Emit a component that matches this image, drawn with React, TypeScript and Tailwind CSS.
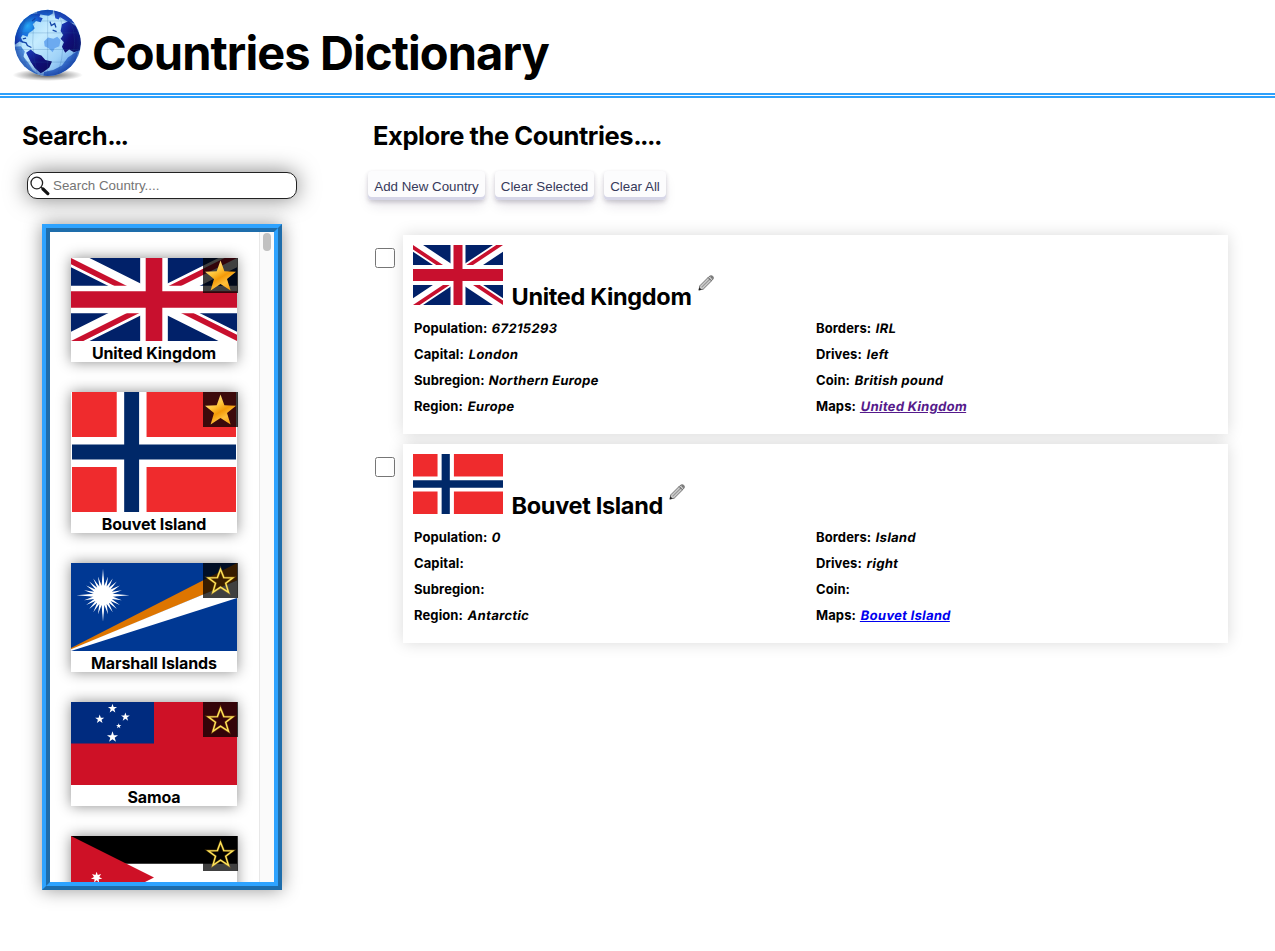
import { useId } from "react";
import type { ReactNode } from "react";

function starPoints(cx: number, cy: number, outer: number, inner: number, n: number) {
  const pts: string[] = [];
  for (let i = 0; i < n * 2; i++) {
    const r = i % 2 === 0 ? outer : inner;
    const a = -Math.PI / 2 + (i * Math.PI) / n;
    pts.push((cx + r * Math.cos(a)).toFixed(2) + "," + (cy + r * Math.sin(a)).toFixed(2));
  }
  return pts.join(" ");
}

function UnitedKingdomFlag({ className }: { className: string }) {
  const id = useId();
  return (
    <svg viewBox="0 0 60 30" preserveAspectRatio="none" className={className}>
      <clipPath id={id}>
        <path d="M30,15h30v15zv15h-30zh-30v-15zv-15h30z" />
      </clipPath>
      <path d="M0,0v30h60v-30z" fill="#012169" />
      <path d="M0,0L60,30M60,0L0,30" stroke="#fff" strokeWidth="6" />
      <path d="M0,0L60,30M60,0L0,30" clipPath={`url(#${id})`} stroke="#c8102e" strokeWidth="4" />
      <path d="M30,0v30M0,15h60" stroke="#fff" strokeWidth="10" />
      <path d="M30,0v30M0,15h60" stroke="#c8102e" strokeWidth="6" />
    </svg>
  );
}

function BouvetFlag({ className }: { className: string }) {
  return (
    <svg viewBox="0 0 22 16" preserveAspectRatio="none" className={className}>
      <path d="M0,0h22v16h-22z" fill="#ef2b2d" />
      <path d="M8,0v16M0,8h22" stroke="#fff" strokeWidth="4" />
      <path d="M8,0v16M0,8h22" stroke="#002868" strokeWidth="2" />
    </svg>
  );
}

function MarshallFlag({ className }: { className: string }) {
  return (
    <svg viewBox="0 0 166 88" preserveAspectRatio="none" className={className}>
      <path d="M0,0h166v88h-166z" fill="#003893" />
      <path d="M0,85L166,0V17.5L0,87z" fill="#dd7500" />
      <path d="M0,86.3L166,17.5V35L0,88z" fill="#fff" />
      <polygon points={starPoints(32, 32.3, 19.5, 9.5, 24)} fill="#fff" />
      <polygon points={starPoints(32, 32.3, 26.5, 2.8, 4)} fill="#fff" />
    </svg>
  );
}

function SamoaFlag({ className }: { className: string }) {
  return (
    <svg viewBox="0 0 166 83" preserveAspectRatio="none" className={className}>
      <path d="M0,0h166v83h-166z" fill="#ce1126" />
      <path d="M0,0h83v41.5h-83z" fill="#002b7f" />
      <polygon points={starPoints(41.5, 6.5, 4.8, 1.9, 5)} fill="#fff" />
      <polygon points={starPoints(28.7, 17.2, 4.8, 1.9, 5)} fill="#fff" />
      <polygon points={starPoints(54.4, 15, 4.6, 1.8, 5)} fill="#fff" />
      <polygon points={starPoints(47.7, 24, 2.8, 1.1, 5)} fill="#fff" />
      <polygon points={starPoints(41.5, 35, 5.8, 2.3, 5)} fill="#fff" />
    </svg>
  );
}

function JordanFlag({ className }: { className: string }) {
  return (
    <svg viewBox="0 0 166 83" preserveAspectRatio="none" className={className}>
      <path d="M0,0h166v83h-166z" fill="#fff" />
      <path d="M0,0h166v27.7h-166z" fill="#000" />
      <path d="M0,55.3h166v27.7h-166z" fill="#007a3d" />
      <path d="M0,0L83,41.5L0,83z" fill="#ce1126" />
      <polygon points={starPoints(25.6, 41.5, 5.8, 2.7, 7)} fill="#fff" />
    </svg>
  );
}

function Globe() {
  return (
    <svg viewBox="36 20 216 226" className="ml-[12px] mt-[7px] h-[75px] w-[72px] shrink-0">
      <defs>
        <radialGradient id="ocean" cx="0.45" cy="0.4" r="0.7">
          <stop offset="0" stopColor="#27a8f4" />
          <stop offset="0.5" stopColor="#1668dc" />
          <stop offset="1" stopColor="#1a2fa8" />
        </radialGradient>
        <linearGradient id="land" x1="0" y1="0" x2="1" y2="1">
          <stop offset="0" stopColor="#7cc8f6" />
          <stop offset="0.4" stopColor="#c6ecff" />
          <stop offset="0.65" stopColor="#9fd2f8" />
          <stop offset="1" stopColor="#2c6fd0" />
        </linearGradient>
        <linearGradient id="deep" x1="0" y1="0" x2="1" y2="1">
          <stop offset="0" stopColor="#1b3fc0" />
          <stop offset="0.5" stopColor="#100f78" />
          <stop offset="1" stopColor="#0c0a58" />
        </linearGradient>
        <radialGradient id="rim" cx="0.5" cy="0.5" r="0.5">
          <stop offset="0.8" stopColor="#0a2c8e" stopOpacity="0" />
          <stop offset="1" stopColor="#0a2c8e" stopOpacity="0.5" />
        </radialGradient>
        <radialGradient id="ground">
          <stop offset="0" stopColor="#000" stopOpacity="0.7" />
          <stop offset="0.6" stopColor="#000" stopOpacity="0.25" />
          <stop offset="1" stopColor="#000" stopOpacity="0" />
        </radialGradient>
        <clipPath id="ball">
          <circle cx="143" cy="128" r="100" />
        </clipPath>
      </defs>
      <ellipse cx="143" cy="225" rx="106" ry="18" fill="url(#ground)" />
      <g clipPath="url(#ball)">
        <path d="M36 20h216v226H36z" fill="url(#land)" />
        <path d="M45 110L60 66L88 42L122 38L118 50L128 54L122 66L108 62L98 72L104 84L96 92L86 98L82 110L68 104L62 112L70 128L58 124L44 134z" fill="url(#ocean)" />
        <path d="M108 28L160 26L158 40L146 46L130 44L112 40z" fill="#1c62d0" />
        <path d="M162 30L206 40L232 70L206 66L190 56L180 50L176 58L166 54z" fill="#2350c8" />
        <path d="M186 72L206 62L228 78L246 120L240 150L222 156L208 148L196 158L186 140L192 126L182 116L190 104L182 92z" fill="url(#deep)" />
        <path d="M78 158L92 148L106 160L124 166L136 180L156 184L148 202L132 214L122 220L104 204L92 186z" fill="url(#deep)" />
        <path d="M132 124L144 112L160 116L172 110L182 120L178 138L164 144L158 156L146 144L134 138z" fill="#6caaf0" />
        <path d="M42 140L62 138L74 154L70 170L86 190L98 210L120 228L90 230L50 190z" fill="#2b70d2" opacity="0.75" />
        <path d="M236 150L226 184L202 212L166 228L130 230L132 216L160 210L186 196L204 172z" fill="#1b50bc" opacity="0.75" />
        <path d="M46 98H240M44 148H242M56 186H230M70 62H214M143 28V226M108 36Q86 126 112 224M178 36Q204 126 174 222M74 62Q48 126 78 196M212 62Q238 126 210 192" fill="none" stroke="#245f9b" strokeWidth="1.4" opacity="0.45" />
        <path d="M64 124L78 128L82 136L94 142M68 116L78 114M96 62L106 54M150 64L154 76L164 70L168 82M158 90L170 94" stroke="#1547a8" strokeWidth="4" fill="none" />
        <circle cx="143" cy="128" r="100" fill="url(#rim)" />
      </g>
    </svg>
  );
}

function GoldStar() {
  return (
    <svg viewBox="0 0 35 35" className="size-[35px]">
      <defs>
        <linearGradient id="gold" x1="0.2" y1="0" x2="0.8" y2="1">
          <stop offset="0" stopColor="#ffe9a8" />
          <stop offset="0.35" stopColor="#ffc53a" />
          <stop offset="0.55" stopColor="#f39a08" />
          <stop offset="0.75" stopColor="#ffc03c" />
          <stop offset="1" stopColor="#f79a05" />
        </linearGradient>
      </defs>
      <path d="M17.5 2.5L21.4 13.3L33 13.7L24 20.9L27.6 32.5L17.5 25.9L7.6 32.5L11 20.9L2 13.7L13.7 13.3z" fill="url(#gold)" />
    </svg>
  );
}

function OutlineStar() {
  return (
    <svg viewBox="0 0 35 35" className="size-[35px]">
      <path d="M17.5 6.2L20.8 14.6L29.8 14.8L22.7 20.3L25.5 29.4L17.5 24.2L9.9 29.4L12.5 20.3L5.2 14.8L14.4 14.6z" fill="none" stroke="#f0a818" strokeOpacity="0.3" strokeWidth="2.6" />
      <path d="M17.5 6.2L20.8 14.6L29.8 14.8L22.7 20.3L25.5 29.4L17.5 24.2L9.9 29.4L12.5 20.3L5.2 14.8L14.4 14.6z" fill="none" stroke="#ffe45a" strokeWidth="1.4" />
    </svg>
  );
}

function Pencil() {
  return (
    <svg viewBox="0 0 16 16" className="size-4">
      <path d="M1 15L1.8 10.8L11 1.6Q13 0 14.8 1.3Q16.2 3.2 14.4 5L5.2 14.2z" fill="#cdcdcd" stroke="#727272" strokeWidth="1" />
      <path d="M3.6 12.4L12 4" stroke="#9a9a9a" strokeWidth="1.2" />
      <path d="M10.2 2.6L13.4 5.8" stroke="#555" strokeWidth="1" />
      <path d="M0.5 15.5L1.4 12.4L3.6 14.6z" fill="#222" />
      <path d="M12 1.8Q13.4 0.6 14.6 1.5Q15.7 3 14.3 4.2z" fill="#777" />
    </svg>
  );
}

function Magnifier() {
  return (
    <svg viewBox="0 0 20 20" className="size-5 shrink-0">
      <circle cx="6.8" cy="7" r="5.8" fill="#fff" stroke="#222" strokeWidth="1.3" />
      <path d="M10.9 11.1L13 13" stroke="#222" strokeWidth="1.4" />
      <path d="M13 13L17.8 17.6" stroke="#111" strokeWidth="3.2" strokeLinecap="round" />
    </svg>
  );
}

function FlagCard({ name, favourite, children }: { name?: string; favourite?: boolean; children: ReactNode }) {
  return (
    <div className="relative flex w-[166px] shrink-0 flex-col items-center bg-white shadow-[0_0_13px_rgba(0,0,0,0.45)]">
      {children}
      {name && <div className="h-[21px] whitespace-nowrap pt-px text-[16px] font-bold leading-[23px] tracking-[-0.1px]">{name}</div>}
      <div className="absolute -right-px top-0 size-[35px] bg-black/75">{favourite ? <GoldStar /> : <OutlineStar />}</div>
    </div>
  );
}

function Field({ label, value }: { label: string; value?: ReactNode }) {
  return (
    <div className="h-[26px] whitespace-nowrap leading-[26px]">
      {label}: <span className="ml-[1.5px] inline-block -skew-x-[10deg] tracking-[0.3px]">{value}</span>
    </div>
  );
}

type Country = {
  name: string;
  flag: ReactNode;
  left: [string, string][];
  right: [string, string][];
  link: string;
};

const countries: Country[] = [
  {
    name: "United Kingdom",
    flag: <UnitedKingdomFlag className="h-[60px] w-[90px]" />,
    left: [["Population", "67215293"], ["Capital", "London"], ["Subregion", "Northern Europe"], ["Region", "Europe"]],
    right: [["Borders", "IRL"], ["Drives", "left"], ["Coin", "British pound"]],
    link: "text-[#551a8b] underline",
  },
  {
    name: "Bouvet Island",
    flag: <BouvetFlag className="h-[60px] w-[90px]" />,
    left: [["Population", "0"], ["Capital", ""], ["Subregion", ""], ["Region", "Antarctic"]],
    right: [["Borders", "Island"], ["Drives", "right"], ["Coin", ""]],
    link: "text-[#0000ee] underline",
  },
];

function CountryRow({ country }: { country: Country }) {
  return (
    <div className="flex">
      <input type="checkbox" className="mr-2 mt-[13px] size-5 shrink-0 appearance-none rounded-[2.5px] border border-[#767676] bg-white" />
      <div className="h-[199px] w-[825px] shadow-[0_0_15px_rgba(0,0,0,0.15)]">
        <div className="relative z-10 h-full bg-white p-[10px]">
          <div className="flex h-[70px]">
            {country.flag}
            <h3 className="ml-[8.5px] mt-[37px] whitespace-nowrap text-[23.5px] font-bold leading-[30px] tracking-[-0.32px]">{country.name}</h3>
            <div className="ml-[6px] mt-[30px]"><Pencil /></div>
          </div>
          <div className="grid grid-cols-2 pl-px text-[13px] font-bold tracking-[0.1px]">
            <div>
              {country.left.map(([l, v]) => <Field key={l} label={l} value={v} />)}
            </div>
            <div>
              {country.right.map(([l, v]) => <Field key={l} label={l} value={v} />)}
              <Field label="Maps" value={<a href="#" className={country.link}>{country.name}</a>} />
            </div>
          </div>
        </div>
      </div>
    </div>
  );
}

function ActionButton({ width, children }: { width: string; children: string }) {
  return (
    <button className={"h-[29px] whitespace-nowrap rounded-[4px] bg-[#fcfcfd] pt-[2px] font-['Liberation_Sans',Arial,sans-serif] text-[13.33px] text-[#36395a] shadow-[0_2px_4px_rgba(45,35,66,0.2),0_7px_13px_-3px_rgba(45,35,66,0.15),inset_0_-3px_0_#d6d6e7] " + width}>
      {children}
    </button>
  );
}

export default function App() {
  return (
    <div className="h-[951px] w-[1275px] overflow-hidden bg-white font-['Inter',sans-serif] text-black">
      <header className="flex h-[98px] border-b-[5px] border-double border-[#2ea0fb]">
        <Globe />
        <h1 className="ml-[8px] mt-[24px] whitespace-nowrap text-[47px] font-bold leading-[58px] tracking-[-0.9px]">Countries Dictionary</h1>
      </header>
      <div className="flex">
        <aside className="w-[367px] shrink-0 pl-[22px] pt-[21px]">
          <h2 className="h-[33px] text-[25.5px] font-bold leading-[33px] tracking-[-0.4px]">
            Search<span className="tracking-[-1.8px]">...</span>
          </h2>
          <div className="ml-[5px] mt-[20px] flex h-[27px] w-[270px] items-center rounded-[10px] border border-[#222] bg-white pl-[2px] shadow-[0_0_22px_rgba(0,0,0,0.5)]">
            <Magnifier />
            <input placeholder="Search Country...." className="ml-[3px] w-[220px] font-['Liberation_Sans',Arial,sans-serif] text-[13.33px] outline-none placeholder:text-[#757575]" />
          </div>
          <div className="ml-5 mt-[25px] flex h-[666px] w-[240px] border-8 border-[#2ea3ff] bg-white shadow-[0_0_17px_rgba(0,0,0,0.42)] [border-style:ridge]">
            <div className="flex w-[209px] flex-col gap-[30px] overflow-hidden pl-[21px] pt-[26px]">
              <FlagCard name="United Kingdom" favourite><UnitedKingdomFlag className="h-[83px] w-[166px]" /></FlagCard>
              <FlagCard name="Bouvet Island" favourite><BouvetFlag className="h-[120px] w-[164px]" /></FlagCard>
              <FlagCard name="Marshall Islands"><MarshallFlag className="h-[88px] w-[166px]" /></FlagCard>
              <FlagCard name="Samoa"><SamoaFlag className="h-[83px] w-[166px]" /></FlagCard>
              <FlagCard><JordanFlag className="h-[83px] w-[166px]" /></FlagCard>
            </div>
            <div className="w-[15px] border-l border-[#e8e8e8] bg-[#fafafa] pl-[3px] pt-px">
              <div className="h-[18px] w-2 rounded-full bg-[#c1c1c1]" />
            </div>
          </div>
        </aside>
        <main className="pt-[21px]">
          <h2 className="ml-[6px] h-[33px] whitespace-nowrap text-[25.5px] font-bold leading-[33px] tracking-[-0.42px]">
            Explore the Countries<span className="tracking-[-1.6px]">....</span>
          </h2>
          <div className="ml-px mt-[19px] flex gap-[10px]">
            <ActionButton width="w-[117px]">Add New Country</ActionButton>
            <ActionButton width="w-[99px]">Clear Selected</ActionButton>
            <ActionButton width="w-[62px]">Clear All</ActionButton>
          </div>
          <div className="ml-2 mt-[35px] flex flex-col gap-[10px]">
            {countries.map((c) => <CountryRow key={c.name} country={c} />)}
          </div>
        </main>
      </div>
    </div>
  );
}
